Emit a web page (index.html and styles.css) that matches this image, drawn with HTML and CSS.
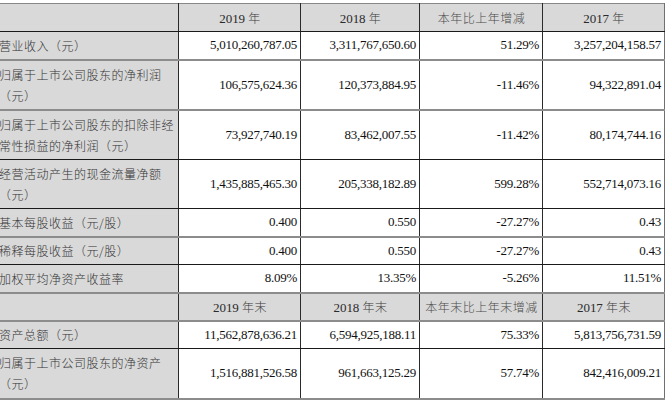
FILE: index.html
```html
<!DOCTYPE html>
<html lang="zh-CN">
<head>
<meta charset="utf-8">
<title>主要会计数据</title>
<link rel="stylesheet" href="styles.css">
</head>
<body>
<table class="fin">
  <colgroup>
    <col class="c-label">
    <col class="c-a">
    <col class="c-b">
    <col class="c-c">
    <col class="c-d">
  </colgroup>
  <tbody>
    <tr class="r-head soft-top hard">
      <th class="label"></th>
      <th>2019 <span class="cj">年</span></th>
      <th>2018 <span class="cj">年</span></th>
      <th class="cn">本年比上年增减</th>
      <th>2017 <span class="cj">年</span></th>
    </tr>
    <tr class="r1 soft">
      <td class="label">营业收入（元）</td>
      <td>5,010,260,787.05</td>
      <td>3,311,767,650.60</td>
      <td>51.29%</td>
      <td>3,257,204,158.57</td>
    </tr>
    <tr class="r2 soft">
      <td class="label">归属于上市公司股东的净利润<br>（元）</td>
      <td>106,575,624.36</td>
      <td>120,373,884.95</td>
      <td>-11.46%</td>
      <td>94,322,891.04</td>
    </tr>
    <tr class="r2 hard">
      <td class="label">归属于上市公司股东的扣除非经<br>常性损益的净利润（元）</td>
      <td>73,927,740.19</td>
      <td>83,462,007.55</td>
      <td>-11.42%</td>
      <td>80,174,744.16</td>
    </tr>
    <tr class="r2b hard">
      <td class="label">经营活动产生的现金流量净额<br>（元）</td>
      <td>1,435,885,465.30</td>
      <td>205,338,182.89</td>
      <td>599.28%</td>
      <td>552,714,073.16</td>
    </tr>
    <tr class="r1 soft">
      <td class="label">基本每股收益（元/股）</td>
      <td>0.400</td>
      <td>0.550</td>
      <td>-27.27%</td>
      <td>0.43</td>
    </tr>
    <tr class="r1 hard">
      <td class="label">稀释每股收益（元/股）</td>
      <td>0.400</td>
      <td>0.550</td>
      <td>-27.27%</td>
      <td>0.43</td>
    </tr>
    <tr class="r1 soft">
      <td class="label">加权平均净资产收益率</td>
      <td>8.09%</td>
      <td>13.35%</td>
      <td>-5.26%</td>
      <td>11.51%</td>
    </tr>
    <tr class="r-head soft">
      <th class="label"></th>
      <th>2019 <span class="cj">年末</span></th>
      <th>2018 <span class="cj">年末</span></th>
      <th class="cn">本年末比上年末增减</th>
      <th>2017 <span class="cj">年末</span></th>
    </tr>
    <tr class="r1 hard">
      <td class="label">资产总额（元）</td>
      <td>11,562,878,636.21</td>
      <td>6,594,925,188.11</td>
      <td>75.33%</td>
      <td>5,813,756,731.59</td>
    </tr>
    <tr class="r2 soft">
      <td class="label">归属于上市公司股东的净资产<br>（元）</td>
      <td>1,516,881,526.58</td>
      <td>961,663,125.29</td>
      <td>57.74%</td>
      <td>842,416,009.21</td>
    </tr>
  </tbody>
</table>
</body>
</html>
```

FILE: styles.css
```css
html, body {
  margin: 0;
  padding: 0;
  background: #ffffff;
  overflow: hidden;
}

body {
  padding-top: 3px;
}

.fin {
  border-collapse: collapse;
  table-layout: fixed;
  width: 672px;
  margin-left: -8px;
  font-family: "Liberation Serif", "Noto Sans CJK SC", serif;
  font-size: 13px;
  color: #111;
}

.c-label { width: 186px; }
.c-a { width: 122px; }
.c-b { width: 119px; }
.c-c { width: 123px; }
.c-d { width: 122px; }

.fin td,
.fin th {
  padding: 0 3px 0 4px;
  border-left: 1px solid #2a2a2a;
  border-right: 1px solid #2a2a2a;
  vertical-align: middle;
  white-space: nowrap;
  overflow: hidden;
}

.fin td:last-child,
.fin th:last-child {
  border-right-color: #707070;
}

.fin td {
  text-align: right;
  letter-spacing: -0.25px;
}

.fin th {
  font-weight: normal;
  text-align: center;
  color: #2a2a2a;
  background: #d9d9d9;
  letter-spacing: -0.1px;
}

.fin th .cj {
  font-family: "Noto Sans CJK SC", sans-serif;
  font-size: 12px;
  font-weight: 300;
  letter-spacing: 0.5px;
  color: #3a3a3a;
}

.fin th.cn {
  font-family: "Noto Sans CJK SC", sans-serif;
  font-size: 12px;
  letter-spacing: 0.5px;
  color: #4a4a4a;
  font-weight: 300;
}

.fin .label {
  background: #d9d9d9;
  text-align: left;
  font-family: "Noto Sans CJK SC", sans-serif;
  font-size: 12px;
  letter-spacing: 0.5px;
  line-height: 21px;
  color: #333;
  font-weight: 300;
  padding-left: 6px;
}

.r-head { height: 28px; }
.r1 { height: 28px; }
.r2 { height: 50px; }
.r2b { height: 49px; }

.soft-top > * { border-top: 1px solid #888; }
.hard > * { border-bottom: 1px solid #1a1a1a; }
.soft > * { border-bottom: 2px solid #8c8c8c; }
```
